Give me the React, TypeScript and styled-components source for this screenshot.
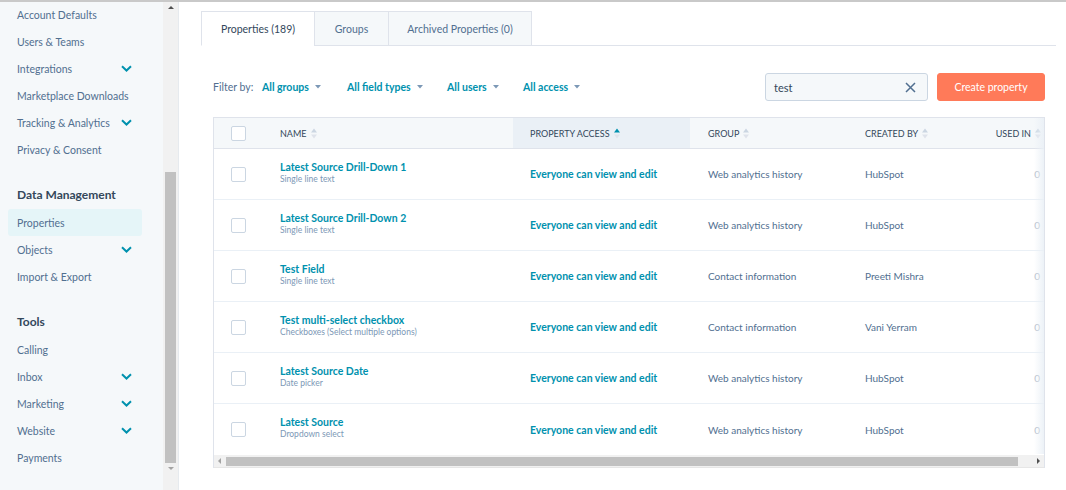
import React from "react"
import styled, { createGlobalStyle } from "styled-components"

//------------------------------
// Data
//------------------------------
type NavEntry = { label: string; chevron?: boolean; active?: boolean }
type NavSection = { title?: string; items: NavEntry[] }

const navSections: NavSection[] = [
  {
    items: [
      { label: "Account Defaults" },
      { label: "Users & Teams" },
      { label: "Integrations", chevron: true },
      { label: "Marketplace Downloads" },
      { label: "Tracking & Analytics", chevron: true },
      { label: "Privacy & Consent" },
    ],
  },
  {
    title: "Data Management",
    items: [
      { label: "Properties", active: true },
      { label: "Objects", chevron: true },
      { label: "Import & Export" },
    ],
  },
  {
    title: "Tools",
    items: [
      { label: "Calling" },
      { label: "Inbox", chevron: true },
      { label: "Marketing", chevron: true },
      { label: "Website", chevron: true },
      { label: "Payments" },
    ],
  },
]

type Row = { name: string; type: string; group: string; by: string }

const rows: Row[] = [
  { name: "Latest Source Drill-Down 1", type: "Single line text", group: "Web analytics history", by: "HubSpot" },
  { name: "Latest Source Drill-Down 2", type: "Single line text", group: "Web analytics history", by: "HubSpot" },
  { name: "Test Field", type: "Single line text", group: "Contact information", by: "Preeti Mishra" },
  { name: "Test multi-select checkbox", type: "Checkboxes (Select multiple options)", group: "Contact information", by: "Vani Yerram" },
  { name: "Latest Source Date", type: "Date picker", group: "Web analytics history", by: "HubSpot" },
  { name: "Latest Source", type: "Dropdown select", group: "Web analytics history", by: "HubSpot" },
]

const TEAL = "#0091ae"

//------------------------------
// Icons
//------------------------------
const Chevron = () => (
  <svg width="11" height="7" viewBox="0 0 11 7">
    <path d="M1 1.2 L5.5 5.5 L10 1.2" fill="none" stroke={TEAL} strokeWidth="2" />
  </svg>
)

const Caret = () => (
  <svg width="6" height="4" viewBox="0 0 6 4">
    <path d="M0 0 H6 L3 3.5 Z" fill="#7c98b6" />
  </svg>
)

const SortIcon = ({ up }: { up?: boolean }) => (
  <svg width="6" height="11" viewBox="0 0 6 11">
    <path d="M0 4.5 L3 0.5 L6 4.5 Z" fill={up ? TEAL : "#cbd6e2"} />
    <path d="M0 6.5 L3 10.5 L6 6.5 Z" fill="#dfe3eb" />
  </svg>
)

const CloseIcon = () => (
  <svg width="11" height="11" viewBox="0 0 11 11">
    <path d="M1 1 L10 10 M10 1 L1 10" stroke="#516f90" strokeWidth="1.5" />
  </svg>
)

//------------------------------
// Main
//------------------------------
export default function App() {
  return (
    <>
      <GlobalStyle />
      <Page>
        <Sidebar>
          <Nav>
            {navSections.map((section, i) => (
              <NavGroup key={i} $spaced={!!section.title}>
                {section.title && <NavTitle>{section.title}</NavTitle>}
                {section.items.map((item) => (
                  <NavItem key={item.label} $active={item.active}>
                    <span>{item.label}</span>
                    {item.chevron && <Chevron />}
                  </NavItem>
                ))}
              </NavGroup>
            ))}
          </Nav>
          <VScroll>
            <ArrowUp />
            <VTrack>
              <VThumb />
            </VTrack>
            <ArrowDown />
          </VScroll>
        </Sidebar>

        <Main>
          <Tabs>
            <Tab $active $w={114}>Properties (189)</Tab>
            <Tab $w={75}>Groups</Tab>
            <Tab $w={144}>Archived Properties (0)</Tab>
            <TabFill />
          </Tabs>

          <Content>
            <FilterRow>
              <FilterLabel>Filter by:</FilterLabel>
              <FilterLink $w={85}>All groups <Caret /></FilterLink>
              <FilterLink $w={100}>All field types <Caret /></FilterLink>
              <FilterLink $w={76}>All users <Caret /></FilterLink>
              <FilterLink $w={70}>All access <Caret /></FilterLink>
              <Spacer />
              <SearchBox>
                <span>test</span>
                <CloseIcon />
              </SearchBox>
              <CreateButton>Create property</CreateButton>
            </FilterRow>

            <Table>
              <HeaderRow>
                <CheckCell>
                  <Checkbox />
                </CheckCell>
                <HeadCell $pad={14}>NAME <SortIcon /></HeadCell>
                <HeadCell $pad={17} $sorted>PROPERTY ACCESS <SortIcon up /></HeadCell>
                <HeadCell $pad={18}>GROUP <SortIcon /></HeadCell>
                <HeadCell $pad={18}>CREATED BY <SortIcon /></HeadCell>
                <HeadCell $pad={0} $right>USED IN <SortIcon /></HeadCell>
              </HeaderRow>
              {rows.map((row) => (
                <BodyRow key={row.name}>
                  <CheckCell>
                    <Checkbox />
                  </CheckCell>
                  <NameCell>
                    <NameLink>{row.name}</NameLink>
                    <NameType>{row.type}</NameType>
                  </NameCell>
                  <Cell $pad={17}>
                    <AccessLink>Everyone can view and edit</AccessLink>
                  </Cell>
                  <Cell $pad={18}>{row.group}</Cell>
                  <Cell $pad={18}>{row.by}</Cell>
                  <Cell $pad={0} $right $muted>0</Cell>
                </BodyRow>
              ))}
              <HScroll>
                <SideArrow $dir="left" />
                <HTrack>
                  <HThumb />
                </HTrack>
                <SideArrow $dir="right" />
              </HScroll>
              <EdgeShade />
            </Table>
          </Content>
        </Main>
      </Page>
    </>
  )
}

//------------------------------
// Styles
//------------------------------
const GlobalStyle = createGlobalStyle`
  html, body {
    margin: 0;
    padding: 0;
    background: #fff;
  }
  body {
    font-family: Lato, "Open Sans", "Liberation Sans", sans-serif;
    color: #33475b;
  }
  * { box-sizing: border-box; }
`

const Page = styled.div`
  display: flex;
  width: 1066px;
  height: 490px;
  border-top: 2px solid #c9c9c9;
  overflow: hidden;
`

const Sidebar = styled.aside`
  display: flex;
  width: 179px;
  flex-shrink: 0;
  background: #f5f8fa;
  border-right: 1px solid #e6eaee;
`

const Nav = styled.nav`
  width: 163px;
  display: flex;
  flex-direction: column;
  margin-top: -1px;
`

const NavGroup = styled.div<{ $spaced?: boolean }>`
  display: flex;
  flex-direction: column;
  margin-top: ${(p) => (p.$spaced ? "18px" : "0")};
`

const NavTitle = styled.div`
  height: 28px;
  line-height: 28px;
  padding-left: 17px;
  font-size: 12px;
  font-weight: 700;
  color: #33475b;
`

const NavItem = styled.div<{ $active?: boolean }>`
  display: flex;
  align-items: center;
  justify-content: space-between;
  height: 27px;
  margin: 0 21px 0 8px;
  padding: 0 9px;
  border-radius: 3px;
  font-size: 10.5px;
  white-space: nowrap;
  color: #516f90;
  background: ${(p) => (p.$active ? "#e5f5f8" : "transparent")};
  svg {
    margin-right: 1px;
    flex-shrink: 0;
  }
`

const VScroll = styled.div`
  width: 15px;
  display: flex;
  flex-direction: column;
  align-items: center;
  background: #f1f1f1;
  padding: 3px 0 2px;
`

const ArrowUp = styled.div`
  width: 0;
  height: 0;
  border-left: 3px solid transparent;
  border-right: 3px solid transparent;
  border-bottom: 3px solid #505050;
  margin: 1px 0 8px;
`

const ArrowDown = styled.div`
  width: 0;
  height: 0;
  border-left: 3px solid transparent;
  border-right: 3px solid transparent;
  border-top: 3px solid #a3a3a3;
  margin: 4px 0 18px;
`

const VTrack = styled.div`
  flex: 1;
  display: flex;
  flex-direction: column;
  justify-content: flex-end;
  width: 100%;
`

const VThumb = styled.div`
  height: 291px;
  margin: 0 2px;
  background: #c1c1c1;
`

const Main = styled.main`
  flex: 1;
  display: flex;
  flex-direction: column;
  padding: 9px 10px 0 22px;
  background: #fff;
`

const Tabs = styled.div`
  display: flex;
  height: 35px;
`

const Tab = styled.div<{ $active?: boolean; $w: number }>`
  width: ${(p) => p.$w}px;
  display: flex;
  align-items: center;
  justify-content: center;
  font-size: 10.5px;
  color: ${(p) => (p.$active ? "#33475b" : "#516f90")};
  background: ${(p) => (p.$active ? "#fff" : "#f5f8fa")};
  border: 1px solid #dfe3eb;
  border-bottom: ${(p) => (p.$active ? "1px solid #fff" : "1px solid #dfe3eb")};
  margin-left: -1px;
  &:first-child {
    margin-left: 0;
  }
`

const TabFill = styled.div`
  flex: 1;
  border-bottom: 1px solid #dfe3eb;
`

const Content = styled.div`
  display: flex;
  flex-direction: column;
  padding: 0 11px 0 12px;
`

const FilterRow = styled.div`
  display: flex;
  align-items: center;
  height: 28px;
  margin-top: 27px;
`

const FilterLabel = styled.span`
  font-size: 10.5px;
  color: #516f90;
  width: 49px;
`

const FilterLink = styled.span<{ $w: number }>`
  display: inline-flex;
  align-items: center;
  gap: 6px;
  width: ${(p) => p.$w}px;
  font-size: 10.5px;
  font-weight: 700;
  color: ${TEAL};
`

const Spacer = styled.div`
  flex: 1;
`

const SearchBox = styled.div`
  display: flex;
  align-items: center;
  justify-content: space-between;
  width: 163px;
  height: 28px;
  padding: 0 11px 0 8px;
  background: #f5f8fa;
  border: 1px solid #cbd6e2;
  border-radius: 3px;
  font-size: 11px;
  color: #33475b;
`

const CreateButton = styled.button`
  width: 108px;
  height: 28px;
  margin-left: 9px;
  border: 1px solid #ff7a59;
  border-radius: 3px;
  background: #ff7a59;
  color: #fff;
  font-family: inherit;
  font-size: 10.5px;
  padding: 0;
`

const Table = styled.div`
  position: relative;
  margin-top: 16px;
  border: 1px solid #dfe3eb;
  border-bottom: none;
`

const columns = "52px 247px 177px 157px 135px 1fr"

const HeaderRow = styled.div`
  display: grid;
  grid-template-columns: ${columns};
  height: 31px;
  background: #f5f8fa;
  border-bottom: 1px solid #dfe3eb;
`

const BodyRow = styled.div`
  display: grid;
  grid-template-columns: ${columns};
  height: 51px;
  border-bottom: 1px solid #eaf0f6;
  &:nth-last-child(3) {
    border-bottom: none;
  }
`

const CheckCell = styled.div`
  display: flex;
  align-items: center;
  padding-left: 17px;
`

const Checkbox = styled.div`
  width: 15px;
  height: 15px;
  border: 1px solid #cbd6e2;
  border-radius: 2px;
  background: #fff;
`

const HeadCell = styled.div<{ $pad: number; $sorted?: boolean; $right?: boolean }>`
  display: flex;
  align-items: center;
  justify-content: ${(p) => (p.$right ? "flex-end" : "flex-start")};
  gap: 4px;
  padding-left: ${(p) => p.$pad}px;
  padding-right: ${(p) => (p.$right ? "3px" : "0")};
  font-size: 9px;
  color: #33475b;
  background: ${(p) => (p.$sorted ? "#eaf0f6" : "transparent")};
`

const Cell = styled.div<{ $pad: number; $right?: boolean; $muted?: boolean }>`
  display: flex;
  align-items: center;
  justify-content: ${(p) => (p.$right ? "flex-end" : "flex-start")};
  padding-left: ${(p) => p.$pad}px;
  padding-right: ${(p) => (p.$right ? "4px" : "0")};
  font-size: 10px;
  color: #516f90;
  color: ${(p) => (p.$muted ? "#b0bccb" : "#516f90")};
  white-space: nowrap;
  overflow: hidden;
`

const NameCell = styled.div`
  display: flex;
  flex-direction: column;
  justify-content: center;
  padding-left: 14px;
  padding-bottom: 4px;
`

const NameLink = styled.span`
  font-size: 10.5px;
  font-weight: 700;
  color: ${TEAL};
  line-height: 14px;
`

const NameType = styled.span`
  font-size: 8.5px;
  color: #7c98b6;
  line-height: 11px;
`

const AccessLink = styled.span`
  font-size: 10.5px;
  font-weight: 700;
  color: ${TEAL};
`

const HScroll = styled.div`
  display: flex;
  align-items: center;
  height: 13px;
  background: #f1f1f1;
  border-bottom: 1px solid #e6e6e6;
`

const SideArrow = styled.div<{ $dir: "left" | "right" }>`
  width: 0;
  height: 0;
  margin: 0 4px;
  border-top: 3px solid transparent;
  border-bottom: 3px solid transparent;
  ${(p) =>
    p.$dir === "left"
      ? "border-right: 3px solid #a3a3a3;"
      : "border-left: 3px solid #505050;"}
`

const HTrack = styled.div`
  flex: 1;
  display: flex;
  height: 100%;
  align-items: center;
`

const HThumb = styled.div`
  width: 792px;
  height: 9px;
  margin-left: 1px;
  background: #c1c1c1;
`

const EdgeShade = styled.div`
  position: absolute;
  top: 0;
  right: 0;
  bottom: 14px;
  width: 10px;
  background: linear-gradient(to right, rgba(234, 240, 246, 0), rgba(234, 240, 246, 0.9));
  pointer-events: none;
`
